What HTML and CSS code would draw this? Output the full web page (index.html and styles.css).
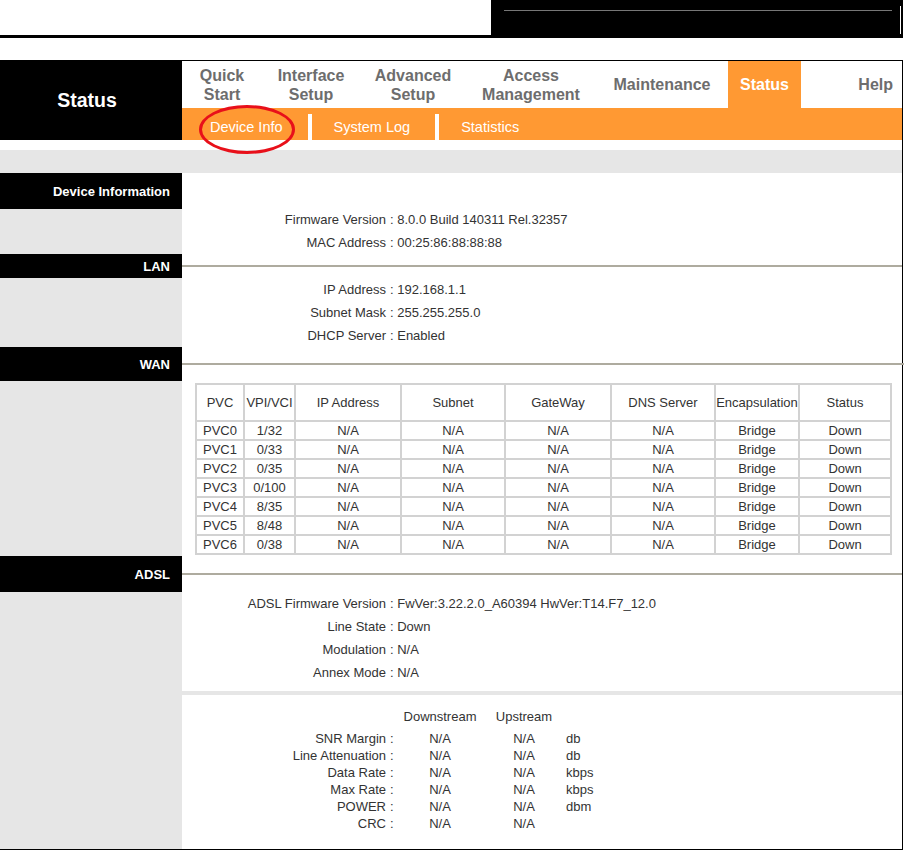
FILE: index.html
```html
<!DOCTYPE html>
<html lang="en">
<head>
    <meta charset="UTF-8">
    <title>Status - Device Info</title>
    <link rel="stylesheet" href="styles.css">
</head>
<body>
    <div class="top">
        <div class="top-left"></div>
        <div class="top-right"><div class="top-rule"></div></div>
    </div>

    <div class="frame">
        <div class="header">
            <div class="brand">Status</div>
            <div class="menus">
                <ul class="nav">
                    <li class="nav-quick">Quick<br>Start</li>
                    <li class="nav-iface">Interface<br>Setup</li>
                    <li class="nav-adv">Advanced<br>Setup</li>
                    <li class="nav-access">Access<br>Management</li>
                    <li class="nav-maint">Maintenance</li>
                    <li class="nav-status active">Status</li>
                    <li class="nav-help">Help</li>
                </ul>
                <ul class="subnav">
                    <li>Device Info</li>
                    <li class="sep"></li>
                    <li>System Log</li>
                    <li class="sep"></li>
                    <li>Statistics</li>
                </ul>
            </div>
        </div>
        <div class="mark"></div>
        <div class="gap"></div>
        <div class="graybar"></div>

        <!-- Device Information -->
        <div class="block block-di">
            <div class="side-head">Device Information</div>
            <div class="main-head no-rule"></div>
            <div class="side"></div>
            <div class="main">
                <div class="info">
                    <span class="label">Firmware Version</span><span class="value">: 8.0.0 Build 140311 Rel.32357</span>
                    <span class="label">MAC Address</span><span class="value">: 00:25:86:88:88:88</span>
                </div>
            </div>
        </div>

        <!-- LAN -->
        <div class="block block-lan">
            <div class="side-head">LAN</div>
            <div class="main-head"></div>
            <div class="side"></div>
            <div class="main">
                <div class="info">
                    <span class="label">IP Address</span><span class="value">: 192.168.1.1</span>
                    <span class="label">Subnet Mask</span><span class="value">: 255.255.255.0</span>
                    <span class="label">DHCP Server</span><span class="value">: Enabled</span>
                </div>
            </div>
        </div>

        <!-- WAN -->
        <div class="block block-wan">
            <div class="side-head">WAN</div>
            <div class="main-head"></div>
            <div class="side"></div>
            <div class="main">
                <div class="wan">
                    <table class="pvc-table">
                        <colgroup>
                            <col class="c-pvc">
                            <col class="c-vpi">
                            <col class="c-ip">
                            <col class="c-subnet">
                            <col class="c-gw">
                            <col class="c-dns">
                            <col class="c-encap">
                            <col class="c-status">
                        </colgroup>
                        <tr>
                            <th>PVC</th><th>VPI/VCI</th><th>IP Address</th><th>Subnet</th>
                            <th>GateWay</th><th>DNS Server</th><th>Encapsulation</th><th>Status</th>
                        </tr>
                        <tr><td>PVC0</td><td>1/32</td><td>N/A</td><td>N/A</td><td>N/A</td><td>N/A</td><td>Bridge</td><td>Down</td></tr>
                        <tr><td>PVC1</td><td>0/33</td><td>N/A</td><td>N/A</td><td>N/A</td><td>N/A</td><td>Bridge</td><td>Down</td></tr>
                        <tr><td>PVC2</td><td>0/35</td><td>N/A</td><td>N/A</td><td>N/A</td><td>N/A</td><td>Bridge</td><td>Down</td></tr>
                        <tr><td>PVC3</td><td>0/100</td><td>N/A</td><td>N/A</td><td>N/A</td><td>N/A</td><td>Bridge</td><td>Down</td></tr>
                        <tr><td>PVC4</td><td>8/35</td><td>N/A</td><td>N/A</td><td>N/A</td><td>N/A</td><td>Bridge</td><td>Down</td></tr>
                        <tr><td>PVC5</td><td>8/48</td><td>N/A</td><td>N/A</td><td>N/A</td><td>N/A</td><td>Bridge</td><td>Down</td></tr>
                        <tr><td>PVC6</td><td>0/38</td><td>N/A</td><td>N/A</td><td>N/A</td><td>N/A</td><td>Bridge</td><td>Down</td></tr>
                    </table>
                </div>
            </div>
        </div>

        <!-- ADSL -->
        <div class="block block-adsl">
            <div class="side-head">ADSL</div>
            <div class="main-head"></div>
            <div class="side"></div>
            <div class="main">
                <div class="info">
                    <span class="label">ADSL Firmware Version</span><span class="value">: FwVer:3.22.2.0_A60394 HwVer:T14.F7_12.0</span>
                    <span class="label">Line State</span><span class="value">: Down</span>
                    <span class="label">Modulation</span><span class="value">: N/A</span>
                    <span class="label">Annex Mode</span><span class="value">: N/A</span>
                </div>
            </div>
        </div>

        <div class="block block-stats">
            <div class="side"></div>
            <div class="main">
                <div class="stats">
                    <span></span><span></span><span class="num">Downstream</span><span class="num">Upstream</span><span></span>
                    <span class="label">SNR Margin</span><span class="colon">:</span><span class="num">N/A</span><span class="num">N/A</span><span class="unit">db</span>
                    <span class="label">Line Attenuation</span><span class="colon">:</span><span class="num">N/A</span><span class="num">N/A</span><span class="unit">db</span>
                    <span class="label">Data Rate</span><span class="colon">:</span><span class="num">N/A</span><span class="num">N/A</span><span class="unit">kbps</span>
                    <span class="label">Max Rate</span><span class="colon">:</span><span class="num">N/A</span><span class="num">N/A</span><span class="unit">kbps</span>
                    <span class="label">POWER</span><span class="colon">:</span><span class="num">N/A</span><span class="num">N/A</span><span class="unit">dbm</span>
                    <span class="label">CRC</span><span class="colon">:</span><span class="num">N/A</span><span class="num">N/A</span><span class="unit"></span>
                </div>
            </div>
        </div>
    </div>
</body>
</html>
```

FILE: styles.css
```css
body {
    margin: 0;
    background-color: #fff;
    color: #333;
    font-family: 'Liberation Sans', Arial, Helvetica, sans-serif;
    font-size: 13px;
}

ul {
    list-style: none;
    margin: 0;
    padding: 0;
}

/* top banner */
.top {
    display: flex;
    width: 903px;
    height: 35px;
    border-bottom: 3px solid #000;
    margin-bottom: 22px;
}

.top-left {
    flex: 0 0 491px;
}

.top-right {
    flex: 1;
    background-color: #000;
    position: relative;
}

.top-rule {
    margin: 10px 11px 0 13px;
    border-top: 1px solid #777;
}

.top-right::after {
    content: '';
    position: absolute;
    right: 2px;
    top: 6px;
    bottom: 1px;
    width: 1px;
    background-color: #fff;
}

/* main frame */
.frame {
    position: relative;
    width: 902px;
    border: 1px solid #000;
    border-left: none;
}

.header {
    display: flex;
}

.brand {
    flex: 0 0 182px;
    height: 79px;
    background-color: #000;
    color: #fff;
    font-weight: bold;
    font-size: 19.5px;
    display: flex;
    align-items: center;
    justify-content: center;
    padding-right: 8px;
    box-sizing: border-box;
}

.menus {
    flex: 1;
    display: flex;
    flex-direction: column;
}

.nav {
    display: flex;
    height: 47px;
}

.nav li {
    display: flex;
    align-items: center;
    justify-content: center;
    text-align: center;
    font-weight: bold;
    font-size: 16px;
    line-height: 19px;
    color: #6d6d6d;
}

.nav-quick { width: 80px; }
.nav-iface { width: 98px; }
.nav-adv { width: 106px; }
.nav-access { width: 130px; }
.nav-maint { width: 132px; }
.nav-status { width: 73px; }

.nav-help {
    flex: 1;
    justify-content: flex-end !important;
    padding-right: 9px;
}

.nav li.active {
    background-color: #ff9933;
    color: #fff;
}

.subnav {
    display: flex;
    align-items: flex-end;
    height: 32px;
    padding-left: 28px;
    background-color: #ff9933;
}

.subnav li {
    height: 26px;
    line-height: 26px;
    color: #fff;
    font-size: 14.5px;
}

.subnav li.sep {
    width: 4px;
    margin: 0 22px 0 25px;
    background-color: #fff;
}

/* annotation circle round the current tab */
.mark {
    position: absolute;
    left: 199px;
    top: 44px;
    width: 96px;
    height: 49px;
    border: 3px solid #e8101a;
    border-radius: 50%;
    box-sizing: border-box;
}

.gap {
    height: 10px;
}

.graybar {
    height: 23px;
    background-color: #e6e6e6;
}

/* sections */
.block {
    display: grid;
    grid-template-columns: 182px 1fr;
}

.side-head {
    background-color: #000;
    color: #fff;
    font-weight: bold;
    font-size: 13px;
    display: flex;
    align-items: center;
    justify-content: flex-end;
    padding-right: 12px;
}

.main-head {
    display: flex;
    align-items: center;
}

.main-head::before {
    content: '';
    flex: 1;
    height: 2px;
    background-color: #aeab9f;
}

.main-head.no-rule::before {
    display: none;
}

.side {
    background-color: #e6e6e6;
}

.block-di .side-head { height: 36px; }
.block-lan .side-head { height: 24px; }
.block-wan .side-head { height: 34px; }
.block-adsl .side-head { height: 36px; }

.info {
    display: grid;
    grid-template-columns: 204px auto;
    line-height: 23px;
}

.block-di .info {
    line-height: 22.5px;
}

.block-adsl .info {
    padding-bottom: 7px;
}

.info .label {
    text-align: right;
}

.info .value {
    padding-left: 4px;
}

/* WAN table */
.wan {
    padding: 2px 12px 1px 13px;
}

.pvc-table {
    width: 100%;
    table-layout: fixed;
    border-collapse: collapse;
    border: 2px solid #d2d2d2;
}

.pvc-table th,
.pvc-table td {
    border: 2px solid #d2d2d2;
    padding: 0;
    text-align: center;
    white-space: nowrap;
    font-weight: normal;
    color: #333;
}

.pvc-table th {
    height: 35px;
}

.pvc-table td {
    height: 17px;
    line-height: 17px;
}

.c-pvc { width: 48px; }
.c-vpi { width: 51px; }
.c-ip { width: 106px; }
.c-subnet { width: 104px; }
.c-gw { width: 106px; }
.c-dns { width: 104px; }
.c-encap { width: 84px; }
.c-status { width: 92px; }

/* line statistics */
.block-stats .main {
    border-top: 4px solid #e6e6e6;
    padding: 8px 0 17px;
}

.stats {
    display: grid;
    grid-template-columns: 204px 8px 92px 76px auto;
    grid-template-rows: 27px repeat(6, 17px);
    align-items: center;
}

.stats .label {
    text-align: right;
}

.stats .colon {
    padding-left: 4px;
}

.stats .num {
    text-align: center;
}

.stats .unit {
    padding-left: 4px;
}
```
